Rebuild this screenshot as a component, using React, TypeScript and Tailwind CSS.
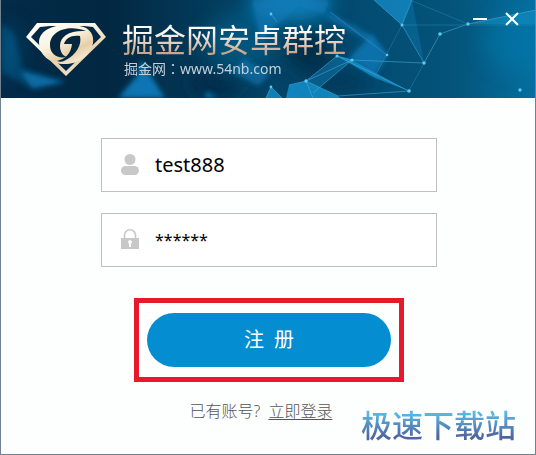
import React from "react";

function NetworkBackdrop() {
  return (
    <svg
      className="absolute inset-0 h-full w-full"
      viewBox="0 0 536 98"
      preserveAspectRatio="xMidYMid slice"
      aria-hidden="true"
    >
      <defs>
        <linearGradient id="sky" x1="0" y1="0" x2="1" y2="0">
          <stop offset="0" stopColor="#022c49" />
          <stop offset="0.2" stopColor="#022741" />
          <stop offset="0.42" stopColor="#033f60" />
          <stop offset="0.65" stopColor="#034a70" />
          <stop offset="0.85" stopColor="#04547b" />
          <stop offset="1" stopColor="#0670a0" />
        </linearGradient>
        <filter id="haze" x="-50%" y="-50%" width="200%" height="200%">
          <feGaussianBlur stdDeviation="10" />
        </filter>
        <filter id="soft" x="-20%" y="-20%" width="140%" height="140%">
          <feGaussianBlur stdDeviation="2.6" />
        </filter>
      </defs>
      <rect width="536" height="98" fill="url(#sky)" />
      <g filter="url(#haze)">
        <ellipse cx="290" cy="4" rx="42" ry="16" fill="#0b8bc6" opacity="0.9" />
        <ellipse cx="240" cy="42" rx="34" ry="28" fill="#06628f" opacity="0.6" />
        <ellipse cx="310" cy="50" rx="24" ry="22" fill="#02253e" opacity="0.8" />
        <ellipse cx="340" cy="82" rx="32" ry="10" fill="#02304f" opacity="0.8" />
        <ellipse cx="215" cy="84" rx="26" ry="14" fill="#02253e" opacity="0.7" />
        <ellipse cx="8" cy="50" rx="10" ry="26" fill="#05547d" opacity="0.6" />
        <ellipse cx="520" cy="42" rx="36" ry="28" fill="#0879ad" opacity="0.5" />
      </g>
      <g filter="url(#soft)" fill="#0b79b8">
        <path d="M2 24 14 34 22 68 66 82 34 90 2 72Z" opacity="0.3" />
        <path d="M20 71 66 82 32 88Z" opacity="0.75" />
        <path d="M141 60 165 98 118 98 137 76Z" opacity="0.95" />
        <path d="M252 0 330 0 325 14 298 7 270 32 260 42Z" opacity="0.65" />
        <path d="M244 58 270 75 258 86 232 72Z" opacity="0.6" />
        <path d="M372 34 388 55 375 76 348 59Z" opacity="0.8" />
        <path d="M330 13 373 36 375 45 325 17Z" opacity="0.65" />
        <path d="M207 91 218 98 204 98Z" opacity="0.8" />
      </g>
      <path d="M374 0 412 0 402 25Z" fill="#168cc9" opacity="0.75" />
      <path d="M412 0 424 62 402 25Z" fill="#0b75ac" opacity="0.45" />
      <path d="M289 85 306 81 338 96 340 98 286 98Z" fill="#159ad8" opacity="0.75" />
      <path d="M337 56 352 60 313 93 306 81Z" fill="#1586bc" opacity="0.45" />
      <path d="M337 56 352 60 409 91 375 78Z" fill="#159ad8" opacity="0.65" />
      <path d="M271 87 282 98H266Z" fill="#159ad8" opacity="0.7" />
      <path d="M468 24 536 10V24Z" fill="#1494cb" opacity="0.5" />
      <g fill="none" stroke="#47afd9" strokeWidth="0.8" opacity="0.7">
        <path d="M402 25 374 0M402 25 412 0M402 25 424 63 440 34 468 24M468 24 536 10" />
        <path d="M424 63 409 91M402 25 375 76M468 24 410 0M402 25H536" opacity="0.5" />
        <path d="M337 56 409 91M337 56 306 81 352 60 424 63M337 56 352 60 313 93M306 81 338 96 409 91M289 85 306 81 313 98" />
        <path d="M271 14 277 22M271 87 282 98M271 87 266 98" />
        <path d="M330 12 387 55" strokeWidth="1.5" opacity="0.4" />
      </g>
      <g fill="#5cc9ed">
        <circle cx="402" cy="25" r="1.5" />
        <circle cx="424" cy="63" r="1.7" />
        <circle cx="440" cy="34" r="1.8" />
        <circle cx="468" cy="24" r="1.7" />
        <circle cx="409" cy="91" r="1.8" />
        <circle cx="337" cy="56" r="1.6" />
        <circle cx="352" cy="60" r="1.6" />
        <circle cx="387" cy="55" r="1.3" />
        <circle cx="306" cy="81" r="1.7" />
        <circle cx="271" cy="87" r="1.4" />
        <circle cx="271" cy="14" r="1.4" />
        <circle cx="520" cy="90" r="1.7" />
      </g>
    </svg>
  );
}

function DiamondLogo() {
  return (
    <svg className="mt-[3px] h-[54px] w-20 shrink-0" viewBox="0 0 80 54" aria-hidden="true">
      <defs>
        <linearGradient id="gold" x1="0" y1="0" x2="0.7" y2="1">
          <stop offset="0" stopColor="#ffffff" />
          <stop offset="0.45" stopColor="#fbf3df" />
          <stop offset="0.75" stopColor="#e6cfa8" />
          <stop offset="1" stopColor="#f8eeda" />
        </linearGradient>
      </defs>
      <path
        fill="url(#gold)"
        fillRule="evenodd"
        d="M11 0H69L80 14 40 53 0 14ZM14 4 5 14 40 48 75 14 67 4 58 3H24Z"
      />
      <path
        fill="url(#gold)"
        d="M13 19C13 9 24 2 41 2C50 2 56 3 60 5C65 8 68 13 67 20C65 31 54 40 41 41C24 42 13 32 13 19Z"
      />
      <g fill="#04263f">
        <path d="M60 8C42 1 24 8 24 22C24 31 31 36 41 34C37 33 34 29 34 23C34 13 44 7 60 8Z" />
        <path d="M38 21C40 15 45 12 54 13C56 21 51 32 38 38C36 39 33 39 31 38C39 36 45 31 46 21Z" />
      </g>
    </svg>
  );
}

function UserIcon() {
  return (
    <svg className="h-[22px] w-[18px] shrink-0" viewBox="0 0 18 22" fill="#c8c8c8" aria-hidden="true">
      <circle cx="9" cy="5.5" r="5.5" />
      <rect y="12" width="18" height="9" rx="4.5" />
    </svg>
  );
}

function LockIcon() {
  return (
    <svg className="h-[22px] w-[18px] shrink-0" viewBox="0 0 18 22" aria-hidden="true">
      <path d="M3.5 10V6a5.5 5.2 0 0 1 11 0v4" fill="none" stroke="#c8c8c8" strokeWidth="1.6" />
      <path d="M0 9H18V20H0Z" fill="#c8c8c8" />
      <path d="M9 11a2 2 0 0 1 1 3.7V18H8v-3.3A2 2 0 0 1 9 11Z" fill="#fff" />
    </svg>
  );
}

export default function App() {
  return (
    <div className="relative flex min-h-screen flex-col border-x border-b border-[#72818f] bg-[#fdfefe] font-['Noto_Sans','Noto_Sans_CJK_SC',sans-serif]">
      <header className="relative flex h-[98px] items-start justify-between overflow-hidden bg-[#033b5c]">
        <NetworkBackdrop />
        <div className="relative flex gap-4 pt-5 pl-[25px]">
          <DiamondLogo />
          <div>
            <h1 className="bg-linear-to-b from-white from-30% to-[#c9a78d] to-90% bg-clip-text font-['Noto_Sans_CJK_SC',sans-serif] text-[32px] leading-9 font-normal whitespace-nowrap text-transparent">
              掘金网安卓群控
            </h1>
            <p className="mt-[3px] pl-0.5 font-['Noto_Sans','Noto_Sans_CJK_TC',sans-serif] text-sm leading-5 whitespace-nowrap text-[#c3d0d9]">
              掘金网：www.54nb.com
            </p>
          </div>
        </div>
        <div className="relative flex gap-3 pt-2.5 pr-[13px] text-white">
          <button type="button" aria-label="最小化" className="flex h-[18px] w-5 items-center justify-center">
            <svg className="h-4 w-4" viewBox="0 0 16 16" aria-hidden="true">
              <path d="M1 8H15" stroke="currentColor" strokeWidth="2" />
            </svg>
          </button>
          <button type="button" aria-label="关闭" className="flex h-[18px] w-5 items-center justify-center">
            <svg className="h-4 w-4" viewBox="0 0 16 16" aria-hidden="true">
              <path d="M2 2 14 14M14 2 2 14" stroke="currentColor" strokeWidth="2" />
            </svg>
          </button>
        </div>
      </header>

      <form className="flex flex-col items-center pt-10 pl-0.5" onSubmit={(e) => e.preventDefault()}>
        <label className="flex h-[54px] w-full max-w-[336px] items-center gap-4 border border-[#bfbfbf] bg-white px-[19px]">
          <UserIcon />
          <input
            type="text"
            aria-label="账号"
            defaultValue="test888"
            className="min-w-0 flex-1 bg-transparent text-xl leading-7 text-black outline-none"
          />
        </label>
        <label className="mt-[21px] flex h-[54px] w-full max-w-[336px] items-center gap-4 border border-[#bfbfbf] bg-white px-[19px]">
          <LockIcon />
          <input
            type="text"
            aria-label="密码"
            defaultValue="******"
            className="min-w-0 flex-1 bg-transparent text-base leading-6 text-black outline-none"
          />
        </label>
        <div className="mt-[31px] flex h-[84px] w-full max-w-[270px] items-center border-5 border-[#e8192c] px-2">
          <button type="submit" className="h-[54px] w-full rounded-full bg-[#048ed1] text-xl text-white">
            注&ensp;册
          </button>
        </div>
        <p className="mt-[17px] flex gap-2 pr-4 text-base leading-6 font-light text-[#555]">
          <span>已有账号?</span>
          <a href="#login" className="underline underline-offset-2">
            立即登录
          </a>
        </p>
      </form>

      <p className="absolute right-[19px] bottom-3 bg-linear-to-b from-[#58b9e6] from-20% to-[#4d65a0] to-85% bg-clip-text font-['Noto_Sans_CJK_SC',sans-serif] text-[31px] leading-9 font-medium whitespace-nowrap text-transparent">
        极速下载站
      </p>
    </div>
  );
}
